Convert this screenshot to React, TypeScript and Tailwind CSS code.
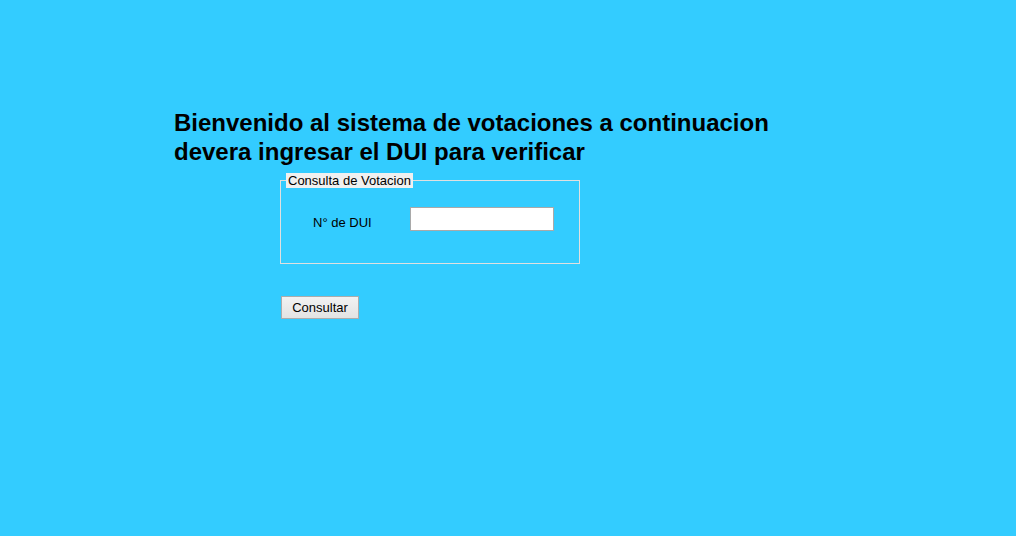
// Pantalla de consulta de DUI
export default function App() {
  return (
    <div className="min-h-[536px] w-full bg-[#33ccff] pl-[174px] pt-[108px] font-['Liberation_Sans',Arial,sans-serif] text-black">
      <h1 className="w-[620px] text-[24px] font-bold leading-[29px]">
        Bienvenido al sistema de votaciones a continuacion devera ingresar el DUI para verificar
      </h1>

      <div className="ml-[106px] mt-[7px]">
        {/* Formulario */}
        <fieldset className="w-[300px] border border-[#e0e0e0] pb-[32px] pl-[5px]">
          <legend className="bg-[#f0f0f0] px-[2px] text-[13px] leading-[15px]">Consulta de Votacion</legend>
          <div className="mt-[19px] flex items-start">
            <label className="ml-[27px] mt-[8px] w-[97px] text-[13px] leading-[15px]">N° de DUI</label>
            <input type="text" className="h-[24px] w-[144px] border border-[#a9a9a9] bg-white px-1 text-[13px] outline-none" />
          </div>
        </fieldset>

        <button
          type="button"
          className="ml-[1px] mt-[32px] h-[23px] w-[78px] border border-[#acacac] bg-gradient-to-b from-[#f2f2f2] to-[#e3e3e3] text-[13px] leading-none"
        >
          Consultar
        </button>
      </div>
    </div>
  );
}
